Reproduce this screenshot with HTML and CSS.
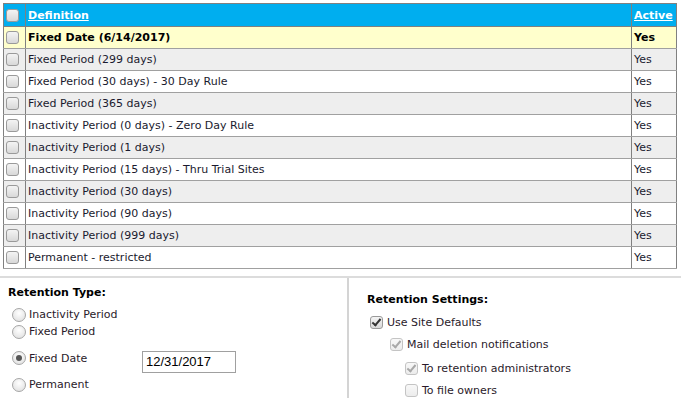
FILE: index.html
```html
<!DOCTYPE html>
<html lang="en">
<head>
<meta charset="UTF-8" />
<title>Retention Policies</title>
<link rel="stylesheet" href="styles.css">
</head>
<body>

<div class="wrap">
  <table class="policy-grid">
    <tr class="head">
      <th class="sel"><span class="chk"></span></th>
      <th class="def"><a href="#">Definition</a></th>
      <th class="act"><a href="#">Active</a></th>
    </tr>
    <tr class="current">
      <td class="sel"><span class="chk"></span></td>
      <td>Fixed Date (6/14/2017)</td>
      <td>Yes</td>
    </tr>
    <tr class="alt">
      <td class="sel"><span class="chk"></span></td>
      <td>Fixed Period (299 days)</td>
      <td>Yes</td>
    </tr>
    <tr>
      <td class="sel"><span class="chk"></span></td>
      <td>Fixed Period (30 days) - 30 Day Rule</td>
      <td>Yes</td>
    </tr>
    <tr class="alt">
      <td class="sel"><span class="chk"></span></td>
      <td>Fixed Period (365 days)</td>
      <td>Yes</td>
    </tr>
    <tr>
      <td class="sel"><span class="chk"></span></td>
      <td>Inactivity Period (0 days) - Zero Day Rule</td>
      <td>Yes</td>
    </tr>
    <tr class="alt">
      <td class="sel"><span class="chk"></span></td>
      <td>Inactivity Period (1 days)</td>
      <td>Yes</td>
    </tr>
    <tr>
      <td class="sel"><span class="chk"></span></td>
      <td>Inactivity Period (15 days) - Thru Trial Sites</td>
      <td>Yes</td>
    </tr>
    <tr class="alt">
      <td class="sel"><span class="chk"></span></td>
      <td>Inactivity Period (30 days)</td>
      <td>Yes</td>
    </tr>
    <tr>
      <td class="sel"><span class="chk"></span></td>
      <td>Inactivity Period (90 days)</td>
      <td>Yes</td>
    </tr>
    <tr class="alt">
      <td class="sel"><span class="chk"></span></td>
      <td>Inactivity Period (999 days)</td>
      <td>Yes</td>
    </tr>
    <tr>
      <td class="sel"><span class="chk"></span></td>
      <td>Permanent - restricted</td>
      <td>Yes</td>
    </tr>
  </table>
</div>

<div class="settings">
  <div class="type-col">
    <div class="title">Retention Type:</div>
    <div class="radio-row first"><span class="rad"></span>Inactivity Period</div>
    <div class="radio-row"><span class="rad"></span>Fixed Period</div>
    <div class="radio-row date-row">
      <span class="rad on"></span><span class="date-label">Fixed Date</span>
      <input type="text" class="date-box" value="12/31/2017" />
    </div>
    <div class="radio-row last"><span class="rad"></span>Permanent</div>
  </div>

  <div class="opts-col">
    <div class="title">Retention Settings:</div>
    <div class="opt lvl0"><span class="chk on"></span>Use Site Defaults</div>
    <div class="opt lvl1"><span class="chk on dim"></span>Mail deletion notifications</div>
    <div class="opt lvl2 first"><span class="chk on dim"></span>To retention administrators</div>
    <div class="opt lvl2"><span class="chk dim"></span>To file owners</div>
  </div>
</div>

</body>
</html>
```

FILE: styles.css
```css
body {
  margin: 0;
  font-family: "DejaVu Sans", Verdana, sans-serif;
  font-size: 11px;
  color: #1a1a2e;
  background: #fff;
  overflow: hidden;
}
.wrap {
  padding: 3px 4px 0 3px;
}
.policy-grid {
  width: 100%;
  border-collapse: collapse;
  border: 1px solid #808080;
}
.policy-grid th,
.policy-grid td {
  border: 1px solid #808080;
  height: 21px;
  padding: 0 2px;
  text-align: left;
  white-space: nowrap;
}
.policy-grid td {
  border-left: 1px solid #808080;
  border-right: 1px solid #808080;
  border-top: 1px solid #a0a0a0;
  border-bottom: 1px solid #a0a0a0;
}
.policy-grid .head th {
  background: #00aeef;
  height: 22px;
}
.policy-grid .head a {
  color: #fff;
  font-weight: bold;
}
.policy-grid .sel {
  width: 17px;
  padding: 0 2px;
}
.policy-grid .act {
  width: 40px;
}
.policy-grid tr.current td {
  background: #ffffcc;
  font-weight: bold;
  color: #000;
}
.policy-grid tr.alt td {
  background: #eeeeee;
}

.chk {
  display: inline-block;
  vertical-align: middle;
  width: 11px;
  height: 11px;
  border: 1px solid #9a9a9a;
  border-radius: 3px;
  background: linear-gradient(#f4f4f4, #d8d8d8);
  position: relative;
}
.chk.on::after {
  content: "";
  position: absolute;
  left: 3px;
  top: 0px;
  width: 3px;
  height: 7px;
  border: solid #333;
  border-width: 0 2px 2px 0;
  transform: rotate(40deg);
}
.chk.dim {
  border-color: #c4c4c4;
  background: linear-gradient(#f8f8f8, #ececec);
}
.chk.dim::after {
  border-color: #a8a8a8;
}

.settings {
  margin-top: 7px;
  border-top: 2px solid #dcdcdc;
  display: grid;
  grid-template-columns: 347px 1fr;
  height: 120px;
}
.title {
  font-weight: bold;
  color: #000;
}
.type-col {
  padding: 8px 0 0 8px;
}
.radio-row {
  display: flex;
  align-items: center;
  height: 17px;
  padding-left: 4px;
}
.radio-row.first {
  margin-top: 7px;
}
.date-row {
  height: 22px;
  margin-top: 7px;
}
.radio-row.last {
  margin-top: 7px;
}
.date-label {
  width: 113px;
}
.date-box {
  width: 86px;
  height: 18px;
  padding: 1px 3px;
  border: 1px solid #a0a0a0;
  font-family: "Liberation Sans", Arial, sans-serif;
  font-size: 13px;
  color: #000;
  margin-top: 7px;
}
.rad {
  display: inline-block;
  width: 12px;
  height: 12px;
  border: 1px solid #a6a6a6;
  border-radius: 50%;
  background: radial-gradient(circle at 50% 35%, #ffffff, #dcdcdc);
  margin-right: 3px;
  position: relative;
  flex: none;
}
.rad.on::after {
  content: "";
  position: absolute;
  left: 3px;
  top: 3px;
  width: 6px;
  height: 6px;
  border-radius: 50%;
  background: #555;
}
.type-col,
.opts-col {
  color: #2a1a2a;
}

.opts-col {
  border-left: 2px solid #d4d4d4;
  padding: 15px 0 0 18px;
}
.opt {
  display: flex;
  align-items: center;
  gap: 4px;
  height: 22px;
}
.opt.lvl0 {
  margin-top: 5px;
  padding-left: 3px;
}
.opt.lvl1 {
  padding-left: 23px;
}
.opt.lvl2 {
  padding-left: 38px;
}
.opt.lvl2.first {
  margin-top: 2px;
}
```
